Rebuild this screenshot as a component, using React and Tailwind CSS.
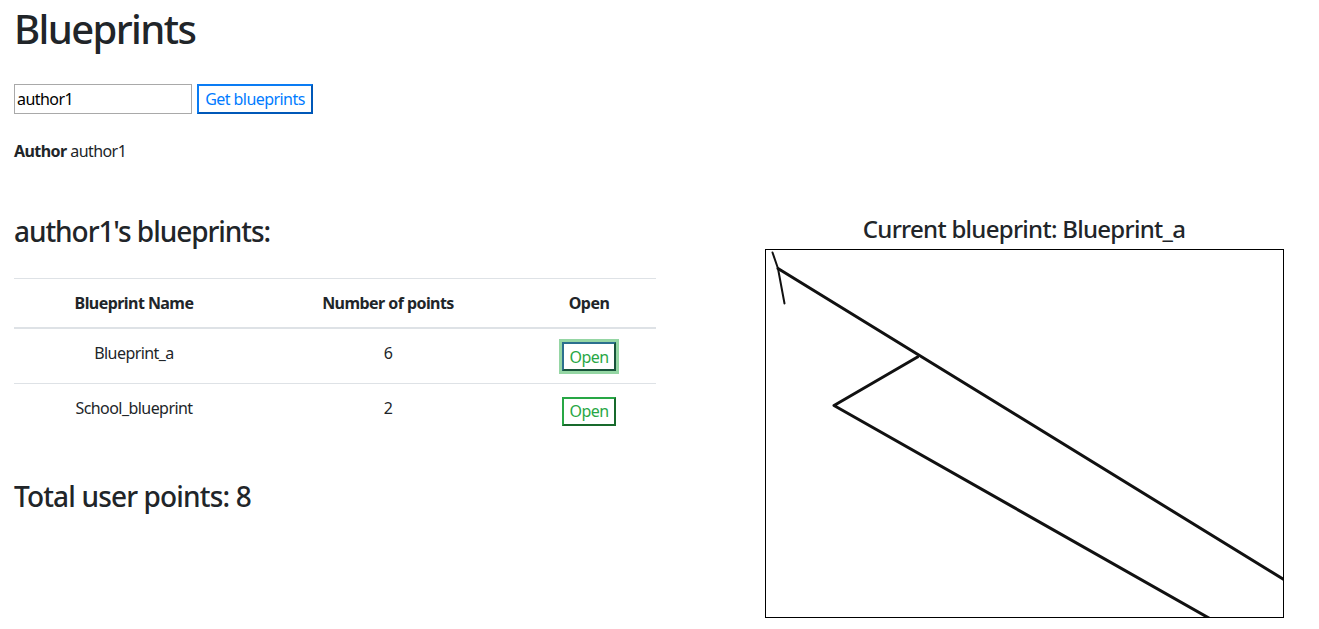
import React from "react";

const blueprints = [
  { name: "Blueprint_a", points: 6, focused: true },
  { name: "School_blueprint", points: 2, focused: false },
];

function BlueprintCanvas() {
  return (
    <div className="w-[519px] h-[369px] border border-black bg-white overflow-hidden">
      <svg width="517" height="367" viewBox="0 0 517 367" fill="none" stroke="#111" strokeLinecap="round" strokeLinejoin="round">
        <polyline points="6.5,2.5 12,18.5 18.5,53.5" strokeWidth="2" />
        <line x1="12" y1="18.5" x2="530" y2="337" strokeWidth="3" />
        <polyline points="151.5,107 68,155.5 464,380" strokeWidth="3" />
      </svg>
    </div>
  );
}

export default function App() {
  const total = blueprints.reduce((sum, b) => sum + b.points, 0);

  return (
    <div className="min-h-screen bg-white pl-[14px] pt-[5px] text-[#212529] font-['Noto_Sans',sans-serif] text-base tracking-[-0.035em]">
      <h1 className="text-[40px] font-medium leading-[48px] mb-[31px] tracking-[-0.04em]">Blueprints</h1>

      <div className="flex items-center gap-[5px]">
        <input
          defaultValue="author1"
          className="w-[178px] h-[30px] border border-[#a9a9a9] px-[2px] text-base text-black outline-none tracking-[-0.035em]"
        />
        <button className="w-[116px] h-[30px] border-2 border-[#0a7cf4] border-r-[#0058b8] border-b-[#0058b8] bg-white text-[#007bff] text-base leading-none tracking-[-0.035em]">
          Get blueprints
        </button>
      </div>

      <p className="mt-[25px] leading-6">
        <span className="font-bold">Author</span> author1
      </p>

      <div className="flex items-start mt-[51px]">
        <div className="w-[642px]">
          <h3 className="text-[28px] font-medium leading-[34px] mb-[30px] tracking-[-0.038em]">author1's blueprints:</h3>
          <table className="w-full border-collapse text-center">
            <thead>
              <tr className="border-t border-[#dee2e6] border-b-2">
                <th className="w-[240px] py-3 font-bold leading-6">Blueprint Name</th>
                <th className="w-[268px] py-3 font-bold leading-6">Number of points</th>
                <th className="py-3 font-bold leading-6">Open</th>
              </tr>
            </thead>
            <tbody>
              {blueprints.map((b, i) => (
                <tr key={b.name} className={i === 0 ? "border-b border-[#dee2e6]" : ""}>
                  <td className="h-[55px] align-top pt-3 leading-6">{b.name}</td>
                  <td className="h-[55px] align-top pt-3 leading-6">{b.points}</td>
                  <td className="h-[55px] align-top pt-3">
                    <button
                      className={
                        b.focused
                          ? "mt-[1px] w-[54px] h-[29px] border-2 border-[#2b6f8e] border-r-[#17543a] border-b-[#17543a] bg-white text-[#28a745] text-base leading-none tracking-[-0.035em] shadow-[0_0_0_3px_#95d6a4]"
                          : "mt-[1px] w-[54px] h-[29px] border-2 border-[#28a745] border-r-[#186a2c] border-b-[#186a2c] bg-white text-[#28a745] text-base leading-none tracking-[-0.035em]"
                      }
                    >
                      Open
                    </button>
                  </td>
                </tr>
              ))}
            </tbody>
          </table>
          <h3 className="text-[28px] font-medium leading-[34px] mt-[41px] tracking-[-0.03em]">Total user points: {total}</h3>
        </div>

        <div className="ml-[73px] w-[590px] flex flex-col items-center">
          <h4 className="text-[24px] font-medium leading-[29px] mb-[6px] tracking-[-0.03em]">Current blueprint: Blueprint_a</h4>
          <BlueprintCanvas />
        </div>
      </div>
    </div>
  );
}
